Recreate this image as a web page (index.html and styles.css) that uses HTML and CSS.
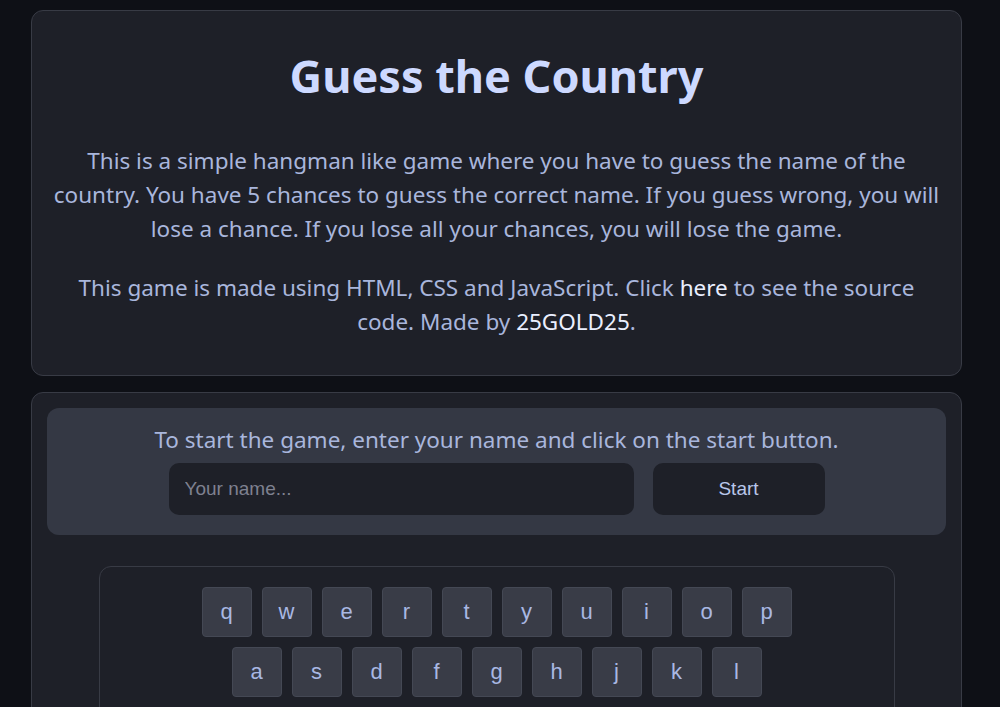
FILE: index.html
```html
<!DOCTYPE html>
<html lang="en">
<head>
<meta charset="utf-8">
<title>Guess the Country</title>
<link rel="stylesheet" href="styles.css">
</head>
<body>
<main class="page">
  <section class="card intro">
    <h1 class="title">Guess the Country</h1>
    <p class="text">This is a simple hangman like game where you have to guess the name of the country. You have 5 chances to guess the correct name. If you guess wrong, you will lose a chance. If you lose all your chances, you will lose the game.</p>
    <p class="text">This game is made using HTML, CSS and JavaScript. Click <a class="link" href="#">here</a> to see the source code. Made by <a class="link" href="#">25GOLD25</a>.</p>
  </section>
  <section class="card game">
    <div class="start-panel">
      <p class="start-text">To start the game, enter your name and click on the start button.</p>
      <div class="start-row">
        <input class="name-input" type="text" placeholder="Your name...">
        <button class="start-btn" type="button">Start</button>
      </div>
    </div>
    <div class="keyboard">
      <div class="key-row">
        <button class="key">q</button><button class="key">w</button><button class="key">e</button><button class="key">r</button><button class="key">t</button><button class="key">y</button><button class="key">u</button><button class="key">i</button><button class="key">o</button><button class="key">p</button>
      </div>
      <div class="key-row">
        <button class="key">a</button><button class="key">s</button><button class="key">d</button><button class="key">f</button><button class="key">g</button><button class="key">h</button><button class="key">j</button><button class="key">k</button><button class="key">l</button>
      </div>
      <div class="key-row">
        <button class="key">z</button><button class="key">x</button><button class="key">c</button><button class="key">v</button><button class="key">b</button><button class="key">n</button><button class="key">m</button>
      </div>
    </div>
  </section>
</main>
</body>
</html>
```

FILE: styles.css
```css
html, body {
  margin: 0;
  padding: 0;
  background: #0e1016;
}
body {
  font-family: "Noto Sans", "Open Sans", sans-serif;
}
.page {
  width: 931px;
  margin: 10px 0 0 31px;
  display: flex;
  flex-direction: column;
  gap: 16px;
}
.card {
  background: #1e2028;
  border: 1px solid #383b45;
  border-radius: 12px;
  box-sizing: border-box;
}
.intro {
  padding: 35px 18px 36px;
  text-align: center;
}
.title {
  margin: 0 0 38px;
  font-size: 45px;
  font-weight: 700;
  color: #cdd9ff;
  line-height: 60px;
}
.text {
  margin: 0 0 25px;
  font-size: 22.5px;
  line-height: 34px;
  color: #a9b6dc;
}
.text:last-child {
  margin-bottom: 0;
}
.link {
  color: #eaefff;
  text-decoration: none;
}
.game {
  padding: 15px 15px 40px;
}
.start-panel {
  background: #343844;
  border-radius: 12px;
  padding: 15px 20px 20px;
  display: flex;
  flex-direction: column;
  align-items: center;
  gap: 6px;
}
.start-text {
  margin: 0;
  font-size: 22.5px;
  line-height: 34px;
  color: #a9b6dc;
}
.start-row {
  display: flex;
  gap: 19px;
}
.name-input {
  width: 465px;
  height: 52px;
  box-sizing: border-box;
  border: none;
  border-radius: 10px;
  background: #1e2028;
  padding: 0 16px;
  font-family: "Liberation Sans", Arial, sans-serif;
  font-size: 19px;
  color: #c8d2ee;
  outline: none;
}
.name-input::placeholder {
  color: #7e8190;
}
.start-btn {
  width: 172px;
  height: 52px;
  border: none;
  border-radius: 10px;
  background: #1e2028;
  font-family: "Liberation Sans", Arial, sans-serif;
  font-size: 19px;
  color: #b9c6ea;
}
.keyboard {
  width: 796px;
  margin: 31px auto 0;
  border: 1px solid #383b45;
  border-radius: 12px;
  padding: 20px 0;
  box-sizing: border-box;
  display: flex;
  flex-direction: column;
  align-items: center;
  gap: 10px;
}
.key-row {
  display: flex;
  gap: 10px;
}
.key {
  width: 50px;
  height: 50px;
  box-sizing: border-box;
  background: #393c47;
  border: 1px solid #444854;
  border-radius: 4px;
  font-family: "Liberation Sans", Arial, sans-serif;
  font-size: 22px;
  color: #a9b8e3;
  padding: 0;
}
```
